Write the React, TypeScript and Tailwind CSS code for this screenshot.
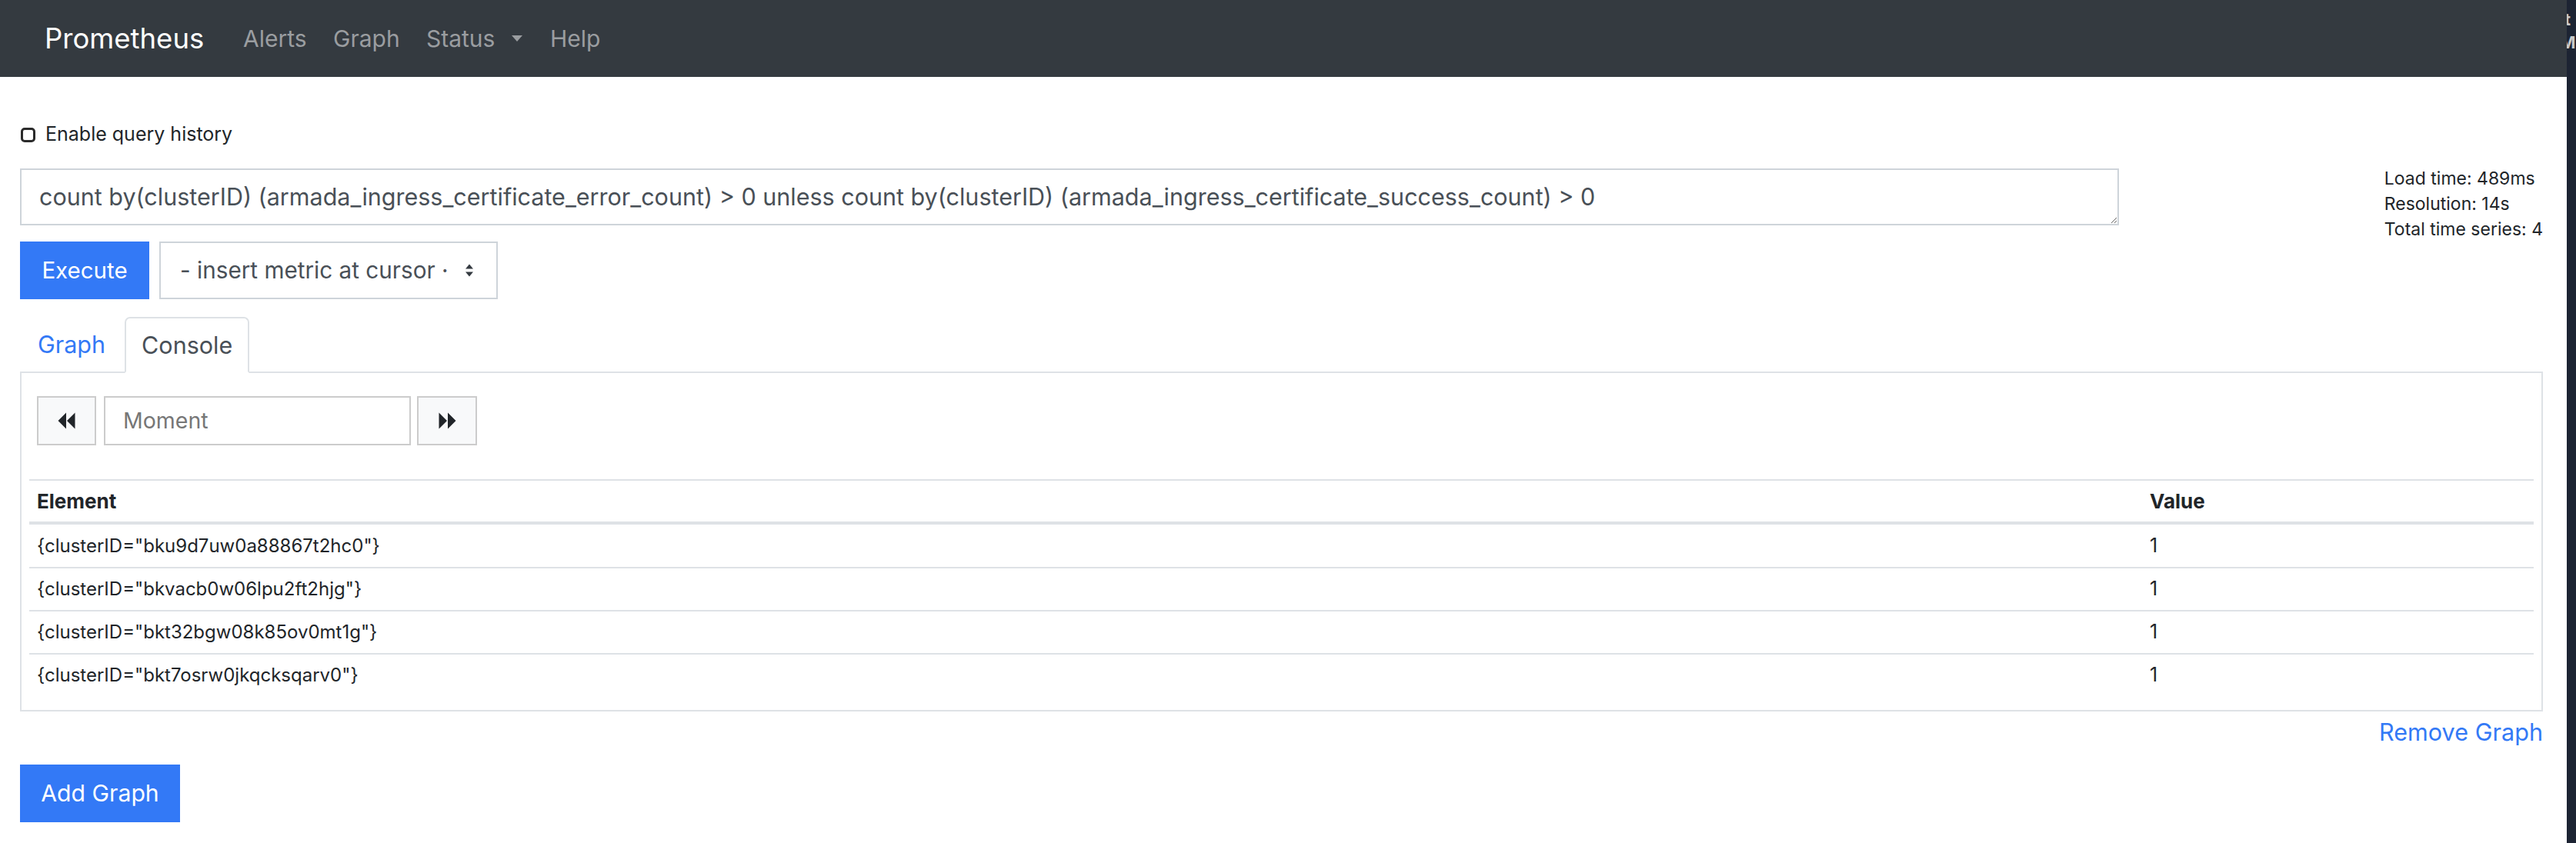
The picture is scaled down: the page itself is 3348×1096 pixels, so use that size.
import React from 'react';

const query =
  'count by(clusterID) (armada_ingress_certificate_error_count) > 0 unless count by(clusterID) (armada_ingress_certificate_success_count) > 0';

const rows = [
  'bku9d7uw0a88867t2hc0',
  'bkvacb0w06lpu2ft2hjg',
  'bkt32bgw08k85ov0mt1g',
  'bkt7osrw0jkqcksqarv0',
];

// fa-backward / fa-forward style double triangles
const Backward = () => (
  <svg width="23" height="22" viewBox="0 0 23 22">
    <path d="M0.5 11 L11 0.5 V21.5 Z M12 11 L22.5 0.5 V21.5 Z" fill="#212529" />
  </svg>
);

const Forward = () => (
  <svg width="23" height="22" viewBox="0 0 23 22">
    <path d="M0.5 0.5 L11 11 L0.5 21.5 Z M12 0.5 L22.5 11 L12 21.5 Z" fill="#212529" />
  </svg>
);

const SelectArrows = () => (
  <svg width="10" height="17" viewBox="0 0 10 17">
    <path d="M0 6.5 L5 0.5 L10 6.5 Z M0 10.5 L5 16.5 L10 10.5 Z" fill="#343a40" />
  </svg>
);

const App: React.FC = () => {
  return (
    <div className="flex min-h-[1096px] w-full font-['Inter',sans-serif] text-[#212529]">
      <div className="flex-1 bg-white">
        {/* navbar */}
        <nav className="flex h-[100px] items-center bg-[#343a40] pl-[58px]">
          <span className="w-[258px] text-[36.5px] text-white">Prometheus</span>
          <span className="w-[117px] text-[30px] text-[#9a9da0]">Alerts</span>
          <span className="w-[121px] text-[30px] text-[#9a9da0]">Graph</span>
          <span className="flex w-[161px] items-center text-[30px] text-[#9a9da0]">
            Status
            <span className="ml-[22px] h-0 w-0 border-x-[7px] border-t-[8px] border-x-transparent border-t-[#9a9da0]" />
          </span>
          <span className="text-[30px] text-[#9a9da0]">Help</span>
        </nav>

        <div className="pl-[26px] pr-[31px]">
          <label className="mt-[60px] flex h-[30px] items-center text-[25px]">
            <span className="ml-[1px] h-[19px] w-[19px] rounded-[5px] border-[3px] border-[#2b2b2b] bg-white" />
            <span className="ml-[13px]">Enable query history</span>
          </label>

          <div className="mt-[29px] flex">
            <div className="w-[2728px]">
              <textarea
                readOnly
                rows={1}
                value={query}
                className="block h-[74px] w-full resize-y border-2 border-[#ced4da] bg-white px-[23px] py-[15px] text-[30.5px] leading-[40px] text-[#495057] outline-none"
              />
              <div className="mt-[21px] flex">
                <button className="flex h-[75px] w-[168px] items-center justify-center bg-[#3379f6] text-[29.5px] text-white">
                  Execute
                </button>
                <div className="ml-[13px] flex h-[75px] w-[440px] items-center border-2 border-[#ced4da] bg-white pl-[25px] pr-[30px] text-[29.7px] text-[#495057]">
                  <span>- insert metric at cursor ·</span>
                  <span className="ml-auto">
                    <SelectArrows />
                  </span>
                </div>
              </div>
            </div>
            <div className="ml-auto -mt-[3px] text-[23px] leading-[33px]">
              <div>Load time: 489ms</div>
              <div>Resolution: 14s</div>
              <div>Total time series: 4</div>
            </div>
          </div>

          {/* tabs */}
          <div className="mt-[23px] flex h-[73px] gap-[2px] border-b-2 border-[#dee2e6]">
            <div className="flex items-center border-2 border-transparent px-[21px] text-[30.5px] text-[#3379f6]">
              Graph
            </div>
            <div className="-mb-[2px] flex items-center rounded-t-[7px] border-2 border-[#dee2e6] border-b-white bg-white px-[20px] text-[30.5px] text-[#495057]">
              Console
            </div>
          </div>

          <div className="border-2 border-t-0 border-[#dee2e6] px-[10px] pb-[18px] pt-[30px]">
            <div className="ml-[10px] flex h-[64px]">
              <button className="flex w-[77px] items-center justify-center border-2 border-[#cccccc] bg-[#f8f9fa]">
                <Backward />
              </button>
              <div className="ml-[10px] flex w-[399px] items-center border-2 border-[#cccccc] bg-white pl-[23px] text-[28.5px] text-[#777777]">
                Moment
              </div>
              <button className="ml-[8px] flex w-[78px] items-center justify-center border-2 border-[#cccccc] bg-[#f8f9fa]">
                <Forward />
              </button>
            </div>

            <div className="mt-[44px] text-[24px]">
              <div className="flex h-[59px] items-center border-b-4 border-t-2 border-[#dee2e6] text-[26px] font-bold">
                <div className="flex-1 pl-[10px]">Element</div>
                <div className="w-[509px] pl-[10px]">Value</div>
              </div>
              {rows.map((id, i) => (
                <div
                  key={id}
                  className={
                    i === 0
                      ? 'flex h-[55px] items-center'
                      : 'flex h-[56px] items-center border-t-2 border-[#dee2e6]'
                  }
                >
                  <div className="flex-1 pl-[10px]">{`{clusterID="${id}"}`}</div>
                  <div className="w-[509px] pl-[10px] text-[25px]">1</div>
                </div>
              ))}
            </div>
          </div>

          <div className="mt-[10px] text-right text-[30.6px] leading-[34px] text-[#3379f6]">Remove Graph</div>

          <button className="mt-[25px] flex h-[75px] w-[208px] items-center justify-center bg-[#3379f6] text-[30.2px] text-white">
            Add Graph
          </button>
        </div>
      </div>

      {/* edge of a neighbouring window */}
      <div className="w-[12px] overflow-hidden bg-[#1d2433]">
        <div className="-ml-[3px] pt-[10px] text-[22px] font-bold leading-[30px] text-[#c9c9c9]">
          <div>t</div>
          <div className="-ml-[6px]">M</div>
        </div>
      </div>
    </div>
  );
};

export default App;
